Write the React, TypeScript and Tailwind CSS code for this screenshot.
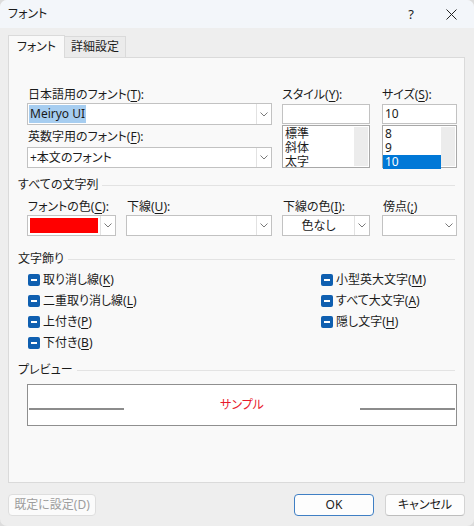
import React from "react";

const U = ({ children }: { children: React.ReactNode }) => (
  <span className="underline underline-offset-[2px] decoration-[1px]">{children}</span>
);

const Chevron = () => (
  <svg width="8" height="5" viewBox="0 0 8 5" className="block">
    <path d="M0.5 0.5 L4 4 L7.5 0.5" fill="none" stroke="#7a7a7a" strokeWidth="1" />
  </svg>
);

function Combo({
  width,
  children,
  divider = true,
  center = false,
}: {
  width: string;
  children?: React.ReactNode;
  divider?: boolean;
  center?: boolean;
}) {
  return (
    <div className={`${width} h-[21px] flex bg-white border border-[#c2c2c2]`}>
      <div className={`flex-1 flex items-center min-w-0 ${center ? "justify-center" : "pl-[2px]"}`}>
        {children}
      </div>
      <div
        className={`w-[15px] flex items-center justify-center ${divider ? "border-l border-[#e2e2e2]" : ""}`}
      >
        <Chevron />
      </div>
    </div>
  );
}

function SectionHeader({ title }: { title: string }) {
  return (
    <div className="flex items-center h-[14px] pl-[9px] pr-[9px]">
      <span className="leading-[14px]">{title}</span>
      <div className="flex-1 h-px bg-[#e3e3e3] ml-[4px]" />
    </div>
  );
}

function Check({ children }: { children: React.ReactNode }) {
  return (
    <div className="h-[21px] flex items-center">
      <div className="w-[12px] h-[12px] rounded-[2px] bg-[#0f5fb0] flex items-center justify-center">
        <div className="w-[6px] h-[2px] bg-white" />
      </div>
      <span className="ml-[3px] leading-[14px]">{children}</span>
    </div>
  );
}

function ListBox({ items, selected, width }: { items: string[]; selected?: number; width: string }) {
  return (
    <div className={`${width} h-[43px] mt-[1px] bg-white border border-[#a8a8a8] flex`}>
      <div className="flex-1 flex flex-col pt-[1px]">
        {items.map((it, i) => (
          <div
            key={it}
            className={`h-[14px] leading-[14px] pl-[2px] ${i === selected ? "bg-[#0078d7] text-white" : ""}`}
          >
            {it}
          </div>
        ))}
      </div>
      <div className="w-[14px] my-[1px] mr-[1px] bg-[#ececec]" />
    </div>
  );
}

export default function App() {
  return (
    <div className="w-[474px] h-[526px] bg-[#dcdcdc]">
      <div
        className="w-[474px] h-[526px] flex flex-col bg-[#eeeeee] rounded-[7px] overflow-hidden text-[12px] text-[#1b1b1b] font-['Noto_Sans','Noto_Sans_CJK_JP',sans-serif] [font-feature-settings:'palt']"
      >
        {/* title bar */}
        <div className="h-[28px] shrink-0 bg-[#f3f6fa] flex items-center pl-[8px]">
          <span className="leading-[14px]">フォント</span>
          <div className="flex-1" />
          <span className="w-[12px] text-center text-[13px] leading-[14px] mr-[29px]">?</span>
          <svg width="11" height="11" viewBox="0 0 11 11" className="mr-[17px]">
            <path d="M0.5 0.5 L10.5 10.5 M10.5 0.5 L0.5 10.5" stroke="#222" strokeWidth="1" />
          </svg>
        </div>

        {/* tabs */}
        <div className="h-[29px] shrink-0 flex items-end pl-[8px]">
          <div className="h-[23px] w-[57px] bg-[#f9f9f9] border border-b-0 border-[#dadada] flex items-center justify-center relative top-px z-10">
            <span className="leading-[14px]">フォント</span>
          </div>
          <div className="h-[21px] w-[61px] bg-[#ebebeb] border border-b-0 border-l-0 border-[#dadada] flex items-center justify-center">
            <span className="leading-[14px]">詳細設定</span>
          </div>
        </div>

        {/* panel */}
        <div className="ml-[8px] w-[457px] h-[426px] shrink-0 bg-[#f9f9f9] border border-[#dadada] flex flex-col pt-[30px]">
          {/* top block */}
          <div className="flex pl-[18px]">
            <div className="w-[245px] flex flex-col">
              <div className="h-[14px] leading-[14px] pl-[1px]">
                日本語用のフォント(<U>T</U>):
              </div>
              <div className="mt-[1px] w-[245px] h-[22px] flex bg-white border border-[#c2c2c2]">
                <div className="flex-1 flex items-center pl-[1px]">
                  <span className="bg-[#a6cdf0] h-[18px] leading-[18px] pl-[1px] pr-[1px]">Meiryo UI</span>
                </div>
                <div className="w-[15px] flex items-center justify-center border-l border-[#e2e2e2]">
                  <Chevron />
                </div>
              </div>
              <div className="mt-[5px] h-[14px] leading-[14px] pl-[1px]">
                英数字用のフォント(<U>F</U>):
              </div>
              <div className="mt-[3px]">
                <Combo width="w-[245px]">+本文のフォント</Combo>
              </div>
            </div>
            <div className="w-[88px] ml-[10px] flex flex-col">
              <div className="h-[14px] leading-[14px]">
                スタイル(<U>Y</U>):
              </div>
              <div className="mt-[2px] h-[20px] bg-white border border-[#c2c2c2]" />
              <ListBox width="w-[88px]" items={["標準", "斜体", "太字"]} />
            </div>
            <div className="w-[75px] ml-[12px] flex flex-col">
              <div className="h-[14px] leading-[14px]">
                サイズ(<U>S</U>):
              </div>
              <div className="mt-[2px] h-[20px] bg-white border border-[#c2c2c2] flex items-center pl-[2px]">
                10
              </div>
              <ListBox width="w-[75px]" items={["8", "9", "10"]} selected={2} />
            </div>
          </div>

          {/* all text */}
          <div className="mt-[10px]">
            <SectionHeader title="すべての文字列" />
          </div>
          <div className="mt-[8px] flex pl-[18px]">
            <div className="w-[89px] flex flex-col">
              <div className="h-[14px] leading-[14px] pl-[1px]">
                フォントの色(<U>C</U>):
              </div>
              <div className="mt-[1px] w-[89px] h-[21px] flex bg-white border border-[#c2c2c2]">
                <div className="flex-1 p-[2px]">
                  <div className="w-full h-full bg-[#ff0000]" />
                </div>
                <div className="w-[15px] flex items-center justify-center border-l border-[#e2e2e2]">
                  <Chevron />
                </div>
              </div>
            </div>
            <div className="w-[146px] ml-[10px] flex flex-col">
              <div className="h-[14px] leading-[14px] pl-[1px]">
                下線(<U>U</U>):
              </div>
              <div className="mt-[1px]">
                <Combo width="w-[146px]" />
              </div>
            </div>
            <div className="w-[88px] ml-[10px] flex flex-col">
              <div className="h-[14px] leading-[14px] pl-[1px]">
                下線の色(<U>I</U>):
              </div>
              <div className="mt-[1px]">
                <Combo width="w-[88px]" center>
                  色なし
                </Combo>
              </div>
            </div>
            <div className="w-[75px] ml-[12px] flex flex-col">
              <div className="h-[14px] leading-[14px] pl-[1px]">
                傍点(<U>;</U>)
              </div>
              <div className="mt-[1px]">
                <Combo width="w-[75px]" divider={false} />
              </div>
            </div>
          </div>

          {/* effects */}
          <div className="mt-[16px]">
            <SectionHeader title="文字飾り" />
          </div>
          <div className="mt-[3px] flex pl-[19px]">
            <div className="w-[293px] flex flex-col">
              <Check>
                取り消し線(<U>K</U>)
              </Check>
              <Check>
                二重取り消し線(<U>L</U>)
              </Check>
              <Check>
                上付き(<U>P</U>)
              </Check>
              <Check>
                下付き(<U>B</U>)
              </Check>
            </div>
            <div className="flex flex-col">
              <Check>
                小型英大文字(<U>M</U>)
              </Check>
              <Check>
                すべて大文字(<U>A</U>)
              </Check>
              <Check>
                隠し文字(<U>H</U>)
              </Check>
            </div>
          </div>

          {/* preview */}
          <div className="mt-[10px]">
            <SectionHeader title="プレビュー" />
          </div>
          <div className="mt-[7px] ml-[18px] w-[430px] h-[42px] bg-white border border-[#8f8f8f] flex items-center px-[1px]">
            <div className="w-[95px] h-[2px] bg-[#8c8c8c] mt-[8px]" />
            <div className="flex-1 text-center text-[#e8192c] leading-[14px] -mt-[1px]">サンプル</div>
            <div className="w-[95px] h-[2px] bg-[#8c8c8c] mt-[8px]" />
          </div>
        </div>

        {/* footer */}
        <div className="mt-[11px] flex pl-[8px]">
          <div className="w-[88px] h-[22px] rounded-[4px] bg-[#fbfbfb] border border-[#dedede] flex items-center justify-center text-[#9d9d9d]">
            既定に設定(D)
          </div>
          <div className="flex-1" />
          <div className="w-[80px] h-[22px] rounded-[4px] bg-[#fdfdfd] border border-[#3f7fc4] flex items-center justify-center">
            OK
          </div>
          <div className="w-[80px] h-[22px] ml-[11px] mr-[9px] rounded-[4px] bg-[#fdfdfd] border border-[#d3d3d3] border-b-[#bdbdbd] flex items-center justify-center">
            キャンセル
          </div>
        </div>
      </div>
    </div>
  );
}
